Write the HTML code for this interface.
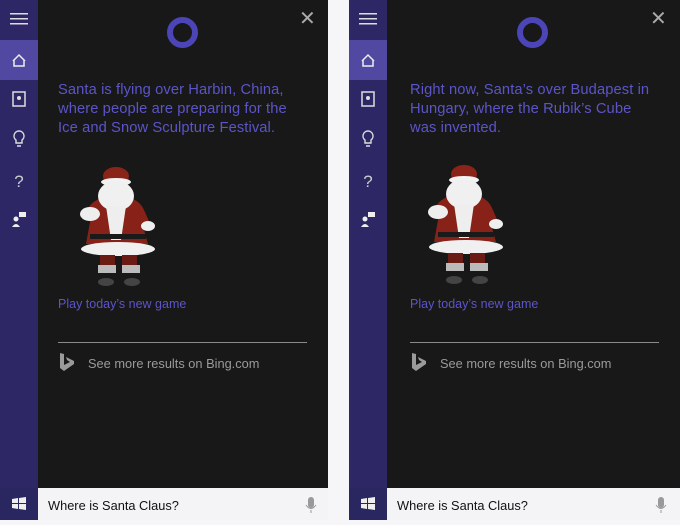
<!DOCTYPE html>
<html><head><meta charset="utf-8"><style>
*{margin:0;padding:0;box-sizing:border-box}
body{width:680px;height:524px;background:#f6f6f8;position:relative;overflow:hidden;font-family:"Segoe UI","Liberation Sans","DejaVu Sans",sans-serif}
.panel{position:absolute;top:0;height:520px;background:#181818}
.side{position:absolute;left:0;top:0;width:38px;height:488px;background:#2d2865}
.side .act{position:absolute;left:0;top:40px;width:38px;height:40px;background:#5148a2}
.msg{position:absolute;top:81px;color:#5b55c8;font-size:14.7px;line-height:19px;letter-spacing:.1px}
.play{position:absolute;top:297px;color:#5b55c8;font-size:12.5px}
.hr{position:absolute;top:342px;height:1px;background:#8a8a8a}
.bing{position:absolute;top:356px;color:#9a9a9a;font-size:12.8px}
.search{position:absolute;top:488px;height:32px;background:#f4f4f6;font-size:12.8px;color:#111;padding:10px 0 0 10px}
.win{position:absolute;left:0;top:488px;width:38px;height:32px;background:#2a2660}
.close{position:absolute;top:11px;color:#aaa;font-size:20px;font-weight:300;line-height:16px}
.ring{position:absolute;top:17px;width:31px;height:31px;border-radius:50%;border:6px solid #4b45b8}
</style></head><body>

<svg width="0" height="0" style="position:absolute"><defs>
<g id="santa">
 <ellipse cx="38" cy="10" rx="13" ry="9" fill="#8a2318"/>
 <ellipse cx="38" cy="16" rx="15" ry="4" fill="#f2f2f2"/>
 <path d="M10 42 Q18 30 38 30 Q60 30 66 44 L74 62 L66 64 L70 78 L8 78 L12 56 Z" fill="#882218"/>
 <ellipse cx="38" cy="30" rx="18" ry="15" fill="#f0f0f0"/>
 <path d="M28 40 L48 40 L43 74 L33 74 Z" fill="#eeeeee"/>
 <ellipse cx="12" cy="48" rx="10" ry="7" fill="#eeeeee"/>
 <ellipse cx="70" cy="60" rx="7" ry="5" fill="#eeeeee"/>
 <rect x="12" y="68" width="56" height="5" fill="#1a1a1a"/>
 <ellipse cx="40" cy="83" rx="37" ry="7" fill="#f0f0f0"/>
 <rect x="22" y="89" width="15" height="11" fill="#6a1c14"/>
 <rect x="44" y="89" width="15" height="11" fill="#6a1c14"/>
 <rect x="20" y="99" width="18" height="8" fill="#bbbbbb"/>
 <rect x="44" y="99" width="18" height="8" fill="#bbbbbb"/>
 <ellipse cx="28" cy="116" rx="8" ry="4" fill="#444"/>
 <ellipse cx="54" cy="116" rx="8" ry="4" fill="#444"/>
</g>
<g id="side">
 <rect x="10" y="13" width="18" height="1.5" fill="#ddd"/><rect x="10" y="18" width="18" height="1.5" fill="#ddd"/><rect x="10" y="23" width="18" height="1.5" fill="#ddd"/>
 <path d="M13 61 L19 55 L25 61 M14 60 V66 H24 V60" stroke="#eee" stroke-width="1.5" fill="none"/>
 <rect x="13" y="92" width="12" height="14" stroke="#ddd" stroke-width="1.5" fill="none"/><circle cx="19" cy="98" r="2" fill="#ddd"/>
 <path d="M19 131 a5 5 0 0 1 3 9 v3 h-6 v-3 a5 5 0 0 1 3 -9z M17 146 h4" stroke="#ddd" stroke-width="1.4" fill="none"/>
 <text x="19" y="187" text-anchor="middle" fill="#ccc" font-size="17" font-family="Liberation Sans,sans-serif">?</text>
 <circle cx="16" cy="219" r="2.5" fill="#eee"/><path d="M12 227 q4 -6 8 0z" fill="#eee"/><rect x="19" y="212" width="7" height="5" fill="#eee"/>
</g>
</defs></svg>

<div class="panel" style="left:0;width:328px">
 <div class="side"><div class="act"></div>
  <svg width="38" height="240" style="position:absolute;left:0;top:0"><use href="#side"/></svg></div>
 <div class="ring" style="left:167px"></div>
 <div class="close" style="left:299px">✕</div>
 <div class="msg" style="left:58px">Santa is flying over Harbin, China,<br>where people are preparing for the<br>Ice and Snow Sculpture Festival.</div>
 <svg width="90" height="125" style="position:absolute;left:78px;top:166px"><use href="#santa"/></svg>
 <div class="play" style="left:58px">Play today’s new game</div>
 <div class="hr" style="left:58px;width:249px"></div>
 <svg width="20" height="20" style="position:absolute;left:58px;top:352px"><path d="M2 1 L6 2 V13 L12 10 L9 8 L8 5 L16 9 V12 L6 19 L2 16Z" fill="#9a9a9a"/></svg>
 <div class="bing" style="left:88px">See more results on Bing.com</div>
 <div class="win"><svg width="38" height="32"><path d="M12 11 l6 -1 v5 h-6z M19 10 l7 -1 v6 h-7z M12 16 h6 v5 l-6 -1z M19 16 h7 v6 l-7 -1z" fill="#eee"/></svg></div>
 <div class="search" style="left:38px;width:290px">Where is Santa Claus?
  <svg width="12" height="18" style="position:absolute;left:267px;top:8px"><rect x="3" y="1" width="6" height="11" rx="3" fill="#999"/><path d="M1 9 q5 7 10 0 M6 14 v3" stroke="#999" fill="none"/></svg></div>
</div>

<div class="panel" style="left:349px;width:331px">
 <div class="side"><div class="act"></div>
  <svg width="38" height="240" style="position:absolute;left:0;top:0"><use href="#side"/></svg></div>
 <div class="ring" style="left:168px"></div>
 <div class="close" style="left:301px">✕</div>
 <div class="msg" style="left:61px">Right now, Santa’s over Budapest in<br>Hungary, where the Rubik’s Cube<br>was invented.</div>
 <svg width="90" height="125" style="position:absolute;left:77px;top:164px"><use href="#santa"/></svg>
 <div class="play" style="left:61px">Play today’s new game</div>
 <div class="hr" style="left:61px;width:249px"></div>
 <svg width="20" height="20" style="position:absolute;left:61px;top:352px"><path d="M2 1 L6 2 V13 L12 10 L9 8 L8 5 L16 9 V12 L6 19 L2 16Z" fill="#9a9a9a"/></svg>
 <div class="bing" style="left:91px">See more results on Bing.com</div>
 <div class="win"><svg width="38" height="32"><path d="M12 11 l6 -1 v5 h-6z M19 10 l7 -1 v6 h-7z M12 16 h6 v5 l-6 -1z M19 16 h7 v6 l-7 -1z" fill="#eee"/></svg></div>
 <div class="search" style="left:38px;width:293px">Where is Santa Claus?
  <svg width="12" height="18" style="position:absolute;left:268px;top:8px"><rect x="3" y="1" width="6" height="11" rx="3" fill="#999"/><path d="M1 9 q5 7 10 0 M6 14 v3" stroke="#999" fill="none"/></svg></div>
</div>
</body></html>
